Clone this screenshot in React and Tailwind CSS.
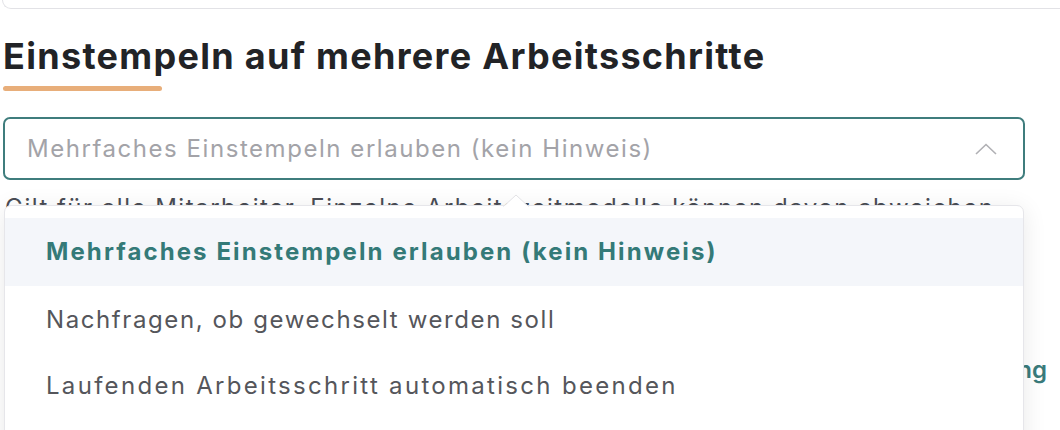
import React from "react";

export default function App() {
  const font = { fontFamily: "Inter, 'Noto Sans', sans-serif" };
  return (
    <div className="w-[1060px] h-[430px] overflow-hidden bg-white relative" style={font}>
      <div className="ml-[2px] h-[9px] border-l border-b border-[#e2e2e6] rounded-bl-[10px]" />
      <div className="pl-[3px] pt-[27px]">
        <h2 className="text-[36px] leading-[40px] font-bold text-[#222326] tracking-[1.3px]">
          Einstempeln auf mehrere Arbeitsschritte
        </h2>
        <div className="mt-[10px] h-[5px] w-[159px] rounded-full bg-[#e8ae7a]" />
        <div className="relative mt-[26px] w-[1022px]">
          <div className="h-[63px] rounded-[7px] border-2 border-[#3f7d7d] flex items-center justify-between pl-[22px] pr-[26px]">
            <span className="text-[24px] tracking-[1.55px] text-[#a3a3a8]">Mehrfaches Einstempeln erlauben (kein Hinweis)</span>
            <svg width="22" height="12" viewBox="0 0 22 12" fill="none">
              <path d="M1 11 L11 1.5 L21 11" stroke="#b0b0b4" strokeWidth="1.6" />
            </svg>
          </div>
          <p className="mt-[12px] pl-[2px] text-[24px] leading-[32px] tracking-[1.5px] text-[#4a4d55] whitespace-nowrap">
            Gilt für alle Mitarbeiter. Einzelne Arbeitszeitmodelle können davon abweichen.
          </p>
          <div className="mt-[128px] w-[1044px] text-right text-[24px] font-semibold text-[#3a7b7b]">
            Änderung
          </div>

          <div className="absolute left-[1px] top-[88px] w-[1020px] h-[260px] bg-white rounded-[7px] border border-[#e6e6ea] shadow-[0_4px_24px_rgba(0,0,0,0.09)] pt-[12px]">
            <svg className="absolute left-[498px] -top-[12px]" width="26" height="13" viewBox="0 0 26 13">
              <path d="M0 13 L13 1 L26 13" fill="white" stroke="#e2e2e6" strokeWidth="1" />
              <rect x="0.5" y="12.2" width="25" height="2" fill="white" />
            </svg>
            <div className="h-[68px] bg-[#f4f6fa] flex items-center pl-[41px] text-[24px] font-bold tracking-[2.1px] text-[#347a78]">
              Mehrfaches Einstempeln erlauben (kein Hinweis)
            </div>
            <div className="h-[67px] flex items-center pl-[41px] text-[24px] tracking-[1.6px] text-[#55565b]">
              Nachfragen, ob gewechselt werden soll
            </div>
            <div className="h-[66px] flex items-center pl-[41px] text-[24px] tracking-[2.3px] text-[#55565b]">
              Laufenden Arbeitsschritt automatisch beenden
            </div>
          </div>
        </div>
      </div>
    </div>
  );
}
